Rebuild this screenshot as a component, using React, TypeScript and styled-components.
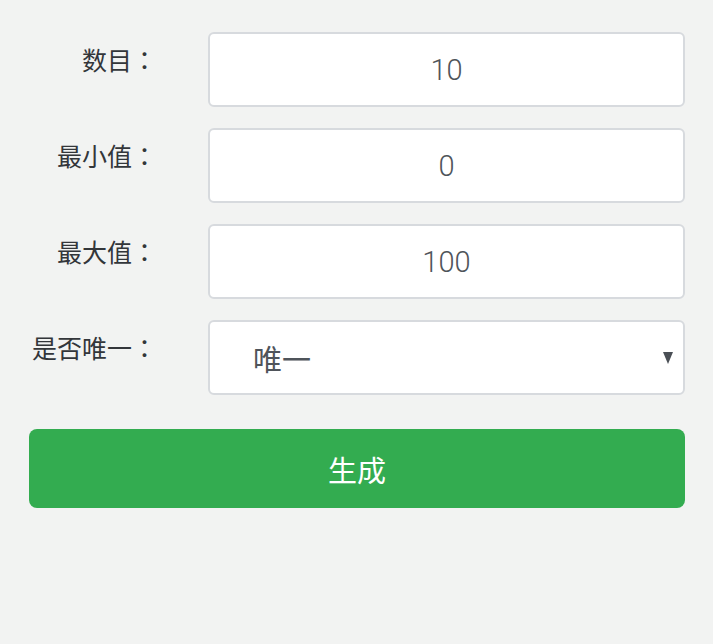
import React from 'react';
import styled, { createGlobalStyle } from 'styled-components';

const GlobalStyle = createGlobalStyle`
  html, body {
    margin: 0;
    padding: 0;
    background: #f2f3f2;
  }
  body {
    font-family: Roboto, "Noto Sans CJK SC", sans-serif;
  }
`;

const Form = styled.div`
  padding: 32px 28px 0 29px;
  display: flex;
  flex-direction: column;
`;

const Row = styled.div`
  display: flex;
  align-items: flex-start;
  margin-bottom: 21px;
`;

const Label = styled.label`
  width: 128px;
  flex: none;
  margin-right: 51px;
  padding-top: 8px;
  text-align: right;
  font-size: 25px;
  line-height: 38px;
  color: #33363a;
  font-family: "Noto Sans CJK SC", sans-serif;
  white-space: nowrap;
`;

const Colon = styled.span`
  font-family: "Noto Sans CJK TC", sans-serif;
`;

const Field = styled.input`
  flex: 1;
  min-width: 0;
  height: 75px;
  box-sizing: border-box;
  border: 2px solid #d7dade;
  border-radius: 6px;
  background: #fff;
  text-align: center;
  font-family: Roboto, "Noto Sans CJK SC", sans-serif;
  font-size: 29px;
  font-weight: 300;
  color: #4f545a;
  outline: none;
  padding: 0 12px;
`;

const SelectWrap = styled.div`
  flex: 1;
  position: relative;

  &::after {
    content: '';
    position: absolute;
    right: 12px;
    top: 32px;
    border-left: 5.5px solid transparent;
    border-right: 5.5px solid transparent;
    border-top: 12px solid #4a4f55;
    pointer-events: none;
  }
`;

const Select = styled.select`
  appearance: none;
  -webkit-appearance: none;
  width: 100%;
  height: 75px;
  box-sizing: border-box;
  border: 2px solid #d7dade;
  border-radius: 6px;
  background: #fff;
  font-family: "Noto Sans CJK SC", sans-serif;
  font-size: 29px;
  color: #4f545a;
  padding: 0 40px 0 43px;
  outline: none;
`;

const Submit = styled.button`
  margin-top: 13px;
  height: 79px;
  border: none;
  border-radius: 8px;
  background: #33ac50;
  color: #fff;
  font-family: "Noto Sans CJK SC", sans-serif;
  font-size: 29px;
  cursor: pointer;
`;

const fields = [
  { label: '数目', value: '10' },
  { label: '最小值', value: '0' },
  { label: '最大值', value: '100' },
];

export default function App() {
  return (
    <>
      <GlobalStyle />
      <Form>
        {fields.map((f) => (
          <Row key={f.label}>
            <Label>
              {f.label}
              <Colon>：</Colon>
            </Label>
            <Field type="text" defaultValue={f.value} />
          </Row>
        ))}
        <Row>
          <Label>
            是否唯一<Colon>：</Colon>
          </Label>
          <SelectWrap>
            <Select defaultValue="1">
              <option value="1">唯一</option>
              <option value="0">不唯一</option>
            </Select>
          </SelectWrap>
        </Row>
        <Submit type="button">生成</Submit>
      </Form>
    </>
  );
}
